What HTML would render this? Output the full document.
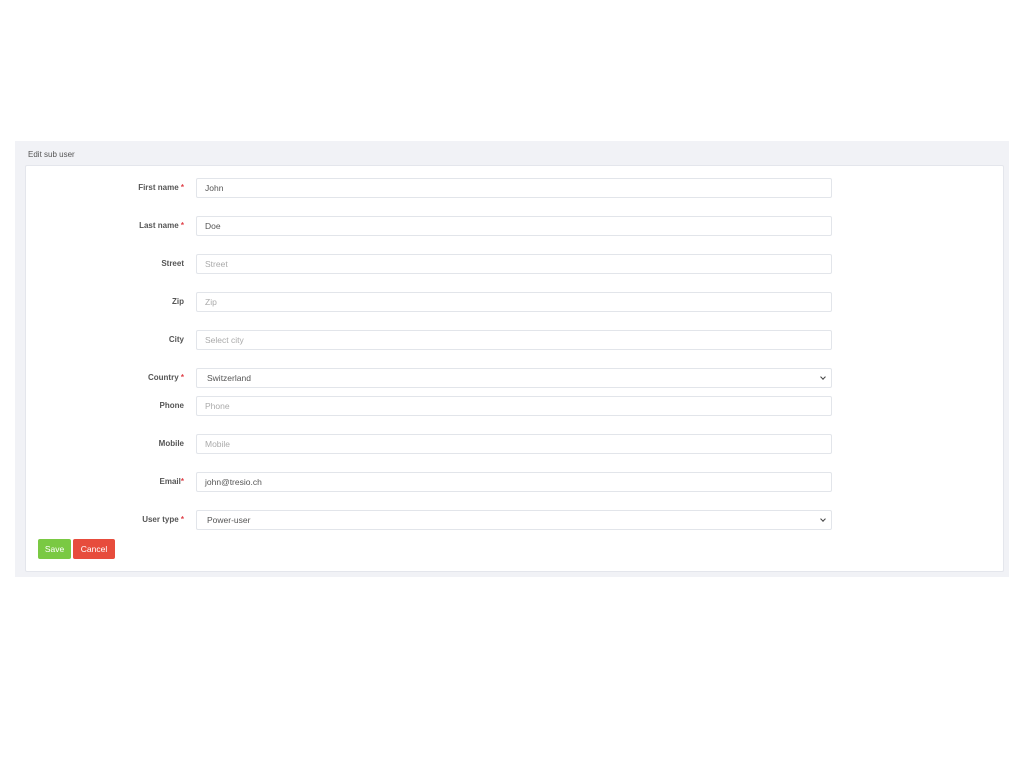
<!DOCTYPE html>
<html><head><meta charset="utf-8"><style>
*{box-sizing:border-box;margin:0;padding:0}
body{width:1024px;height:768px;background:#fff;font-family:"Liberation Sans",sans-serif;position:relative;overflow:hidden}
.outer{position:absolute;left:15px;top:141px;width:994px;height:436px;background:#f1f2f6}
.title{position:absolute;left:28px;top:150px;font-size:8px;color:#555}
.card{position:absolute;left:25px;top:165px;width:979px;height:407px;background:#fff;border:1px solid #e4e6ec;border-radius:2px}
.lbl{position:absolute;right:840px;font-size:8px;font-weight:bold;color:#555;text-align:right}
.lbl b{color:#e0424a}
.in{position:absolute;left:196px;width:636px;height:20px;border:1px solid #e2e5ea;border-radius:2px;font-size:8.5px;color:#555;padding-left:8px;line-height:18px}
.ph{color:#aaa}
.sel{padding-left:10px}
.sel:after{content:"";position:absolute;right:6px;top:6px;width:3px;height:3px;border-right:1px solid #444;border-bottom:1px solid #444;transform:rotate(45deg)}
.btn{position:absolute;top:539px;height:20px;color:#fff;font-size:8.5px;line-height:20px;text-align:center;border-radius:2px}
</style></head><body>
<div class="outer"></div>
<div class="title">Edit sub user</div>
<div class="card"></div>

<div class="lbl" style="top:183px">First name <b>*</b></div><div class="in" style="top:178px">John</div>
<div class="lbl" style="top:221px">Last name <b>*</b></div><div class="in" style="top:216px">Doe</div>
<div class="lbl" style="top:259px">Street</div><div class="in ph" style="top:254px">Street</div>
<div class="lbl" style="top:297px">Zip</div><div class="in ph" style="top:292px">Zip</div>
<div class="lbl" style="top:335px">City</div><div class="in ph" style="top:330px">Select city</div>
<div class="lbl" style="top:373px">Country <b>*</b></div><div class="in sel" style="top:368px">Switzerland</div>
<div class="lbl" style="top:401px">Phone</div><div class="in ph" style="top:396px">Phone</div>
<div class="lbl" style="top:439px">Mobile</div><div class="in ph" style="top:434px">Mobile</div>
<div class="lbl" style="top:477px">Email<b>*</b></div><div class="in" style="top:472px">john@tresio.ch</div>
<div class="lbl" style="top:515px">User type <b>*</b></div><div class="in sel" style="top:510px">Power-user</div>

<div class="btn" style="left:38px;width:33px;background:#7ac943">Save</div>
<div class="btn" style="left:73px;width:42px;background:#e74c3c">Cancel</div>
</body></html>
